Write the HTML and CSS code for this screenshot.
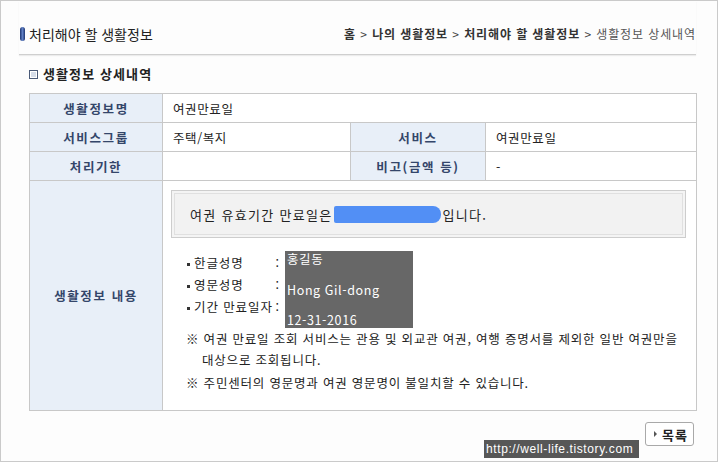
FILE: index.html
```html
<!doctype html>
<html lang="ko">
	<head>
		<meta charset="utf-8">
		<title>생활정보 상세내역</title>
		<link rel="stylesheet" href="styles.css">
	</head>
	<body>
		<div class="frame">
			<div class="page-head">
				<h1 class="page-title"><span class="pill"></span>처리해야 할 생활정보</h1>
				<div class="crumbs">
					<b>홈</b> &gt; <b>나의 생활정보</b> &gt; <b>처리해야 할 생활정보</b> &gt; <span class="current">생활정보 상세내역</span>
				</div>
			</div>

			<h2 class="section-title"><span class="square"></span>생활정보 상세내역</h2>

			<table class="detail">
				<colgroup>
					<col class="c1">
					<col class="c2">
					<col class="c3">
					<col class="c4">
				</colgroup>
				<tr>
					<th>생활정보명</th>
					<td colspan="3">여권만료일</td>
				</tr>
				<tr>
					<th>서비스그룹</th>
					<td>주택/복지</td>
					<th>서비스</th>
					<td>여권만료일</td>
				</tr>
				<tr>
					<th>처리기한</th>
					<td></td>
					<th>비고(금액 등)</th>
					<td>-</td>
				</tr>
				<tr class="content-row">
					<th>생활정보 내용</th>
					<td colspan="3" class="content">
						<div class="notice">여권 유효기간 만료일은 <span class="mask"></span>입니다.</div>
						<div class="person">
							<ul class="labels">
								<li>한글성명 <span>:</span></li>
								<li>영문성명 <span>:</span></li>
								<li>기간 만료일자 <span>:</span></li>
							</ul>
							<div class="values">
								<span>홍길동</span>
								<span>Hong Gil-dong</span>
								<span>12-31-2016</span>
							</div>
						</div>
						<p class="note">※ 여권 만료일 조회 서비스는 관용 및 외교관 여권, 여행 증명서를 제외한 일반 여권만을<br>대상으로 조회됩니다.</p>
						<p class="note">※ 주민센터의 영문명과 여권 영문명이 불일치할 수 있습니다.</p>
					</td>
				</tr>
			</table>

			<div class="actions">
				<button class="btn-list"><span class="arrow"></span>목록</button>
			</div>

			<div class="watermark">http://well-life.tistory.com</div>
		</div>
	</body>
</html>
```

FILE: styles.css
```css
* {
	box-sizing: border-box;
}

body {
	margin: 0;
	font-family: "Noto Sans CJK KR", "Noto Sans", "Liberation Sans", sans-serif;
	font-size: 12px;
	color: #333;
}

.frame {
	position: relative;
	width: 718px;
	height: 462px;
	border: 1px solid #cacaca;
	background: #fdfdfd;
	overflow: hidden;
}

/* titre de page + fil d'ariane */
.page-head {
	display: flex;
	justify-content: space-between;
	align-items: center;
	margin: 0 21px 0 18px;
	padding: 22px 0 9px 0;
	border-bottom: 1px solid #cfcfcf;
	box-shadow: 0 1px 1px #ececec;
}

.page-title {
	margin: 0;
	font-size: 14px;
	font-weight: normal;
	line-height: 22px;
	color: #222;
	display: flex;
	align-items: center;
}

.pill {
	display: inline-block;
	width: 5px;
	height: 14px;
	margin: 0 4px 0 1px;
	border-radius: 3px;
	background: linear-gradient(to right, #1d3570, #5f7fc4 50%, #1d3570);
}

.crumbs {
	font-size: 12px;
	line-height: 22px;
	letter-spacing: 0.9px;
	color: #444;
}

.crumbs b {
	font-weight: 600;
	color: #333;
}

.crumbs .current {
	color: #555;
}

/* sous-titre */
.section-title {
	margin: 10px 0 0 28px;
	font-size: 13px;
	font-weight: bold;
	line-height: 18px;
	letter-spacing: 1.1px;
	color: #222;
	display: flex;
	align-items: center;
}

.square {
	display: inline-block;
	width: 9px;
	height: 9px;
	margin-right: 5px;
	border: 1px solid #4a5a78;
	background: #d6dde9;
	box-shadow: inset 0 0 0 1px #fff;
}

/* tableau */
.detail {
	margin: 10px 0 0 28px;
	width: 667px;
	border-collapse: collapse;
	border: 1px solid #c4c4c4;
	table-layout: fixed;
}

.c1 { width: 133px; }
.c2 { width: 188px; }
.c3 { width: 135px; }
.c4 { width: 211px; }

.detail tr {
	height: 29px;
}

.detail th,
.detail td {
	border: 1px solid #c8c8c8;
	padding: 0 10px;
	font-size: 12.5px;
}

.detail th {
	background: #e8eff8;
	color: #34466a;
	font-weight: bold;
	letter-spacing: 1.6px;
	text-align: center;
}

.detail td {
	background: #fff;
	color: #222;
	letter-spacing: 0.6px;
}

.content-row {
	height: 229px;
}

.detail td.content {
	padding: 9px 10px 17px 8px;
	vertical-align: top;
}

.notice {
	height: 48px;
	padding-left: 18px;
	border: 1px solid #cdcdcd;
	box-shadow: inset 0 0 0 2px #f4f4f4, inset 0 0 0 3px #e0e0e0;
	background: #f2f2f2;
	display: flex;
	align-items: center;
	font-size: 13px;
	letter-spacing: 1.3px;
	color: #222;
}

.mask {
	display: inline-block;
	width: 107px;
	height: 17px;
	margin: 0 1px 0 2px;
	border-radius: 2px 8px 8px 2px;
	background: #528ff5;
}

.person {
	display: flex;
	margin: 13px 0 0 15px;
}

.labels {
	list-style: none;
	margin: 0;
	padding: 1px 0 0 0;
	width: 99px;
}

.labels li {
	position: relative;
	display: flex;
	justify-content: space-between;
	padding-left: 8px;
	line-height: 22px;
	font-size: 12.5px;
	letter-spacing: 0.9px;
	color: #222;
}

.labels li::before {
	content: "";
	position: absolute;
	left: 1px;
	top: 11px;
	width: 3px;
	height: 3px;
	background: #333;
}

.labels li span {
	padding-right: 5px;
}

.values {
	width: 128px;
	height: 77px;
	padding: 0 2px;
	background: #676767;
	color: #fff;
	display: flex;
	flex-direction: column;
	justify-content: space-between;
	line-height: 16px;
	font-size: 12.5px;
	letter-spacing: 0.6px;
}

.note {
	margin: 0 0 0 15px;
	padding-left: 16px;
	text-indent: -16px;
	line-height: 21px;
	font-size: 12.5px;
	letter-spacing: 0.8px;
	color: #222;
	white-space: nowrap;
}

.note + .note {
	margin-top: 2px;
}

/* bouton */
.actions {
	display: flex;
	justify-content: flex-end;
	margin: 11px 23px 0 0;
}

.btn-list {
	display: flex;
	align-items: center;
	width: 49px;
	height: 24px;
	padding: 0 0 0 8px;
	border: 1px solid #a9a9a9;
	border-radius: 3px;
	background: #fff;
	font-family: inherit;
	font-size: 13px;
	font-weight: bold;
	letter-spacing: 1px;
	color: #222;
}

.arrow {
	width: 0;
	height: 0;
	margin-right: 5px;
	border-left: 3px solid #555;
	border-top: 3px solid transparent;
	border-bottom: 3px solid transparent;
}

.watermark {
	position: absolute;
	left: 483px;
	top: 439px;
	width: 155px;
	height: 18px;
	padding-left: 2px;
	background: #575757;
	color: #fff;
	font-family: "Liberation Sans", sans-serif;
	font-size: 12px;
	letter-spacing: 0.6px;
	line-height: 18px;
}
```
